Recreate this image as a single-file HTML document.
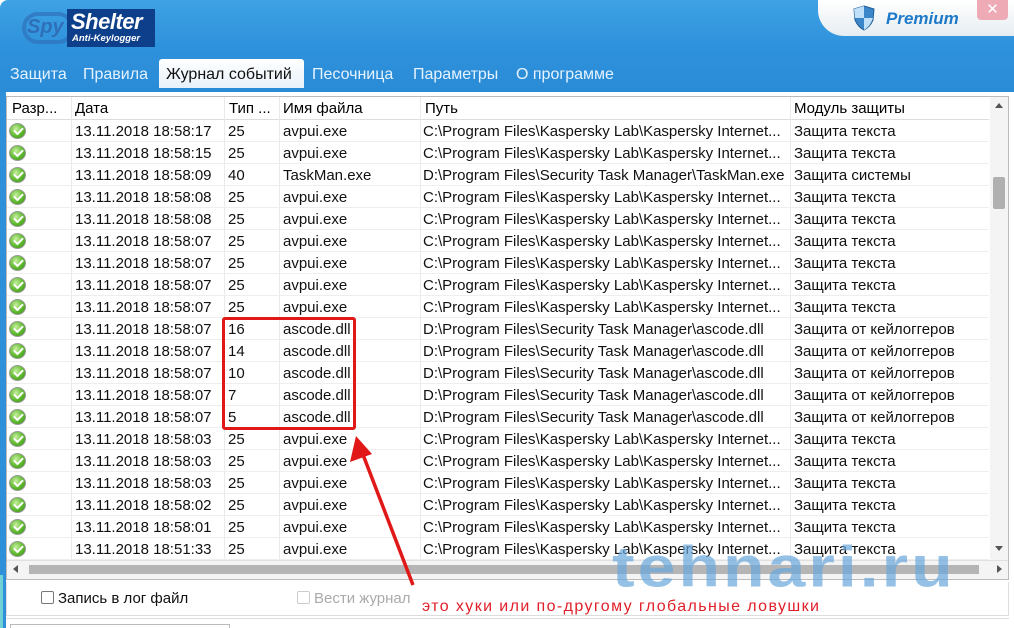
<!DOCTYPE html>
<html><head><meta charset="utf-8"><style>
*{margin:0;padding:0;box-sizing:border-box}
body{width:1014px;height:628px;overflow:hidden;background:#fff;font-family:"Liberation Sans","DejaVu Sans",sans-serif;position:relative}
.hdr{position:absolute;left:0;top:0;width:1014px;height:92px;background:linear-gradient(#3ea2e4,#2f92dc 50%,#2a8bd6);border-radius:8px 0 0 0}
.prem{position:absolute;left:818px;top:0;width:196px;height:36px;background:linear-gradient(#fff,#e6edf2);border-radius:0 0 0 26px}
.close{position:absolute;left:977px;top:0;width:31px;height:20px;background:#eeaab5;border-radius:0 0 4px 4px;color:#fff;font-size:15px;text-align:center;line-height:19px;font-weight:bold}
.tab{position:absolute;top:66px;font-size:16px;color:#e6f3ff}
.tab.act{left:159px;top:59px;width:145px;height:29px;background:linear-gradient(#fff,#e8f2fa);color:#111;padding:7px 0 0 7px;border-radius:3px 3px 0 0}
.tbl{position:absolute;left:6px;top:96px;width:1003px;height:484px;border:1px solid #bbb;background:#fff;overflow:hidden}
.row{position:absolute;left:0;height:22px;width:982px;border-bottom:1px solid #eee;font-size:15px;color:#111}
.row span{position:absolute;top:3px;white-space:nowrap}
.vl{position:absolute;top:0;width:1px;height:463px;background:#eaeaea}
.hd{position:absolute;left:0;top:0;width:982px;height:23px;border-bottom:1px solid #ddd;font-size:15px}
.hd span{position:absolute;top:3px}
.ic{position:absolute;left:2px;top:3px;width:17px;height:16px;border-radius:50%;background:radial-gradient(circle at 40% 35%,#c8f0a0,#5cb82c 55%,#3a8a1c);border:1px solid #9a9a9a}
.ic:after{content:"";position:absolute;left:4px;top:3px;width:7px;height:4px;border-left:2.5px solid #fff;border-bottom:2.5px solid #fff;transform:rotate(-45deg)}
</style></head><body>
<div class="hdr"></div>
<div style="position:absolute;left:22px;top:12px;width:52px;height:32px;border:4px solid #2f74be;border-radius:16px;opacity:.75"></div>
<div style="position:absolute;left:27px;top:16px;font:italic bold 20px 'Liberation Sans';color:#2f6fb8">Spy</div>
<div style="position:absolute;left:67px;top:9px;width:88px;height:38px;background:#0d3f8a"></div>
<div style="position:absolute;left:71px;top:9px;font:italic bold 22px 'Liberation Sans';color:#fff;letter-spacing:-.5px">Shelter</div>
<div style="position:absolute;left:72px;top:33px;font:italic bold 9.5px 'Liberation Sans';color:#fff">Anti-Keylogger</div>
<div class="prem"></div>
<svg style="position:absolute;left:853px;top:5px" width="22" height="26" viewBox="0 0 22 26"><path d="M11 1 L21 4 L20 15 Q17 22 11 25 Q5 22 2 15 L1 4 Z" fill="#3a86c8" stroke="#1f5e98"/><path d="M11 1 L11 13 L2 13 L1 4Z M11 13 L20 13 Q17 22 11 25Z" fill="#bfe0f8"/></svg>
<div style="position:absolute;left:886px;top:9px;font:italic bold 17px 'Liberation Sans';color:#1e7ac8">Premium</div>
<div class="close">✕</div>
<div class="tab" style="left:10px">Защита</div>
<div class="tab" style="left:83px">Правила</div>
<div class="tab act">Журнал событий</div>
<div class="tab" style="left:312px">Песочница</div>
<div class="tab" style="left:413px">Параметры</div>
<div class="tab" style="left:516px">О программе</div>
<div style="position:absolute;left:0;top:92px;width:6px;height:536px;background:#2d90d8"></div>
<div style="position:absolute;left:0;top:575px;width:3px;height:53px;background:#6fd0d8"></div>

<div class="tbl" id="t">
<div class="hd"><span style="left:5px">Разр...</span><span style="left:68px">Дата</span><span style="left:222px">Тип ...</span><span style="left:276px">Имя файла</span><span style="left:418px">Путь</span><span style="left:787px">Модуль защиты</span></div>
<div class="vl" style="left:64px"></div><div class="vl" style="left:217px"></div><div class="vl" style="left:272px"></div><div class="vl" style="left:413px"></div><div class="vl" style="left:783px"></div>
<div style="position:absolute;left:983px;top:0;width:18px;height:463px;background:#f4f4f4"></div>
<div style="position:absolute;left:988px;top:6px;width:0;height:0;border:4px solid transparent;border-bottom:5px solid #555;border-top:0"></div>
<div style="position:absolute;left:986px;top:80px;width:12px;height:32px;background:#b0b0b0;border-radius:2px"></div>
<div style="position:absolute;left:988px;top:449px;width:0;height:0;border:4px solid transparent;border-top:5px solid #555;border-bottom:0"></div>
<div style="position:absolute;left:0;top:463px;width:1001px;height:19px;background:#f4f4f4;border-top:1px solid #e0e0e0"></div>
<div style="position:absolute;left:22px;top:468px;width:950px;height:9px;background:#b5b5b5"></div>
<div style="position:absolute;left:6px;top:468px;border:4px solid transparent;border-right:5px solid #555;border-left:0"></div>
<div style="position:absolute;left:990px;top:468px;border:4px solid transparent;border-left:5px solid #555;border-right:0"></div>
</div>

<div style="position:absolute;left:6px;top:582px;width:1003px;height:34px;border:1px solid #ddd;border-top:0"></div>
<div style="position:absolute;left:41px;top:591px;width:13px;height:13px;border:1px solid #777;border-radius:2px"></div>
<div style="position:absolute;left:58px;top:590px;font-size:15px;color:#111">Запись в лог файл</div>
<div style="position:absolute;left:297px;top:591px;width:13px;height:13px;border:1px solid #ccc;border-radius:2px"></div>
<div style="position:absolute;left:314px;top:590px;font-size:15px;color:#aaa">Вести журнал</div>
<div style="position:absolute;left:422px;top:598px;font-size:16px;letter-spacing:1.4px;color:#e0202a">это хуки или по-другому глобальные ловушки</div>
<div style="position:absolute;left:6px;top:618px;width:1003px;height:1px;background:#ddd"></div>
<div style="position:absolute;left:10px;top:624px;width:220px;height:4px;border:1px solid #bbb;border-bottom:0"></div>

<div style="position:absolute;left:612px;top:534px;font:bold 68px 'Liberation Sans';color:#6aa8dc;opacity:.7;letter-spacing:3px;transform:scaleY(.85);transform-origin:top left">tehnari.ru</div>

<div style="position:absolute;left:222px;top:317px;width:134px;height:113px;border:3px solid #e01818;border-radius:3px"></div>
<svg style="position:absolute;left:0;top:0" width="1014" height="628"><line x1="413" y1="585" x2="362" y2="452" stroke="#e01818" stroke-width="3.5"/><polygon points="356,436 350,462 372,454" fill="#e01818"/></svg>

<script>
var d=[["13.11.2018 18:58:17","25","avpui.exe","C:\\Program Files\\Kaspersky Lab\\Kaspersky Internet...","Защита текста"],
["13.11.2018 18:58:15","25","avpui.exe","C:\\Program Files\\Kaspersky Lab\\Kaspersky Internet...","Защита текста"],
["13.11.2018 18:58:09","40","TaskMan.exe","D:\\Program Files\\Security Task Manager\\TaskMan.exe","Защита системы"]];
var t=["08","08","07","07","07","07"];
t.forEach(function(x){d.push(["13.11.2018 18:58:"+x,"25","avpui.exe","C:\\Program Files\\Kaspersky Lab\\Kaspersky Internet...","Защита текста"])});
["16","14","10","7","5"].forEach(function(x){d.push(["13.11.2018 18:58:07",x,"ascode.dll","D:\\Program Files\\Security Task Manager\\ascode.dll","Защита от кейлоггеров"])});
["18:58:03","18:58:03","18:58:03","18:58:02","18:58:01","18:51:33"].forEach(function(x){d.push(["13.11.2018 "+x,"25","avpui.exe","C:\\Program Files\\Kaspersky Lab\\Kaspersky Internet...","Защита текста"])});
var h="";d.forEach(function(r,i){h+='<div class="row" style="top:'+(23+22*i)+'px"><div class="ic"></div><span style="left:68px">'+r[0]+'</span><span style="left:221px">'+r[1]+'</span><span style="left:276px">'+r[2]+'</span><span style="left:416px">'+r[3]+'</span><span style="left:787px">'+r[4]+'</span></div>'});
document.getElementById("t").insertAdjacentHTML("beforeend",h);
</script>
</body></html>
